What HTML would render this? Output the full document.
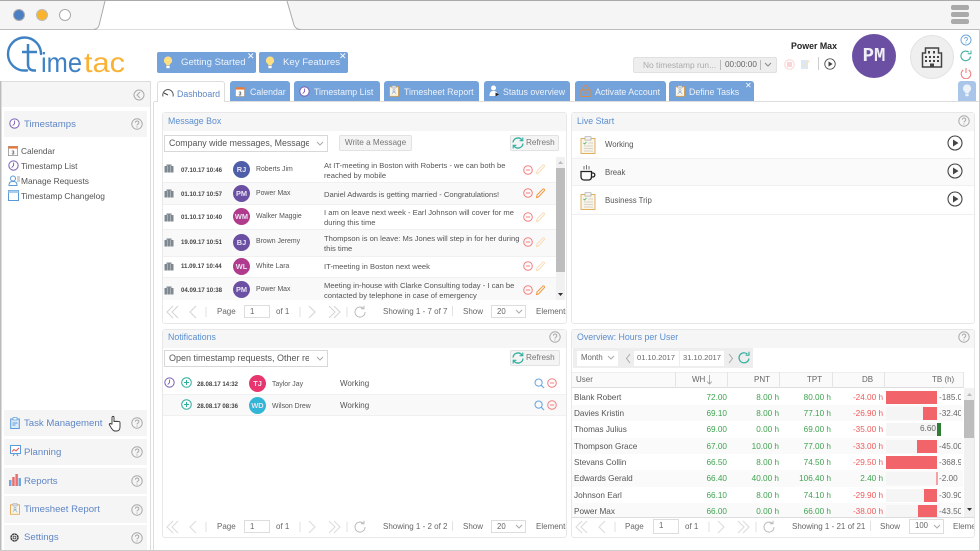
<!DOCTYPE html>
<html><head><meta charset="utf-8"><style>
html,body{margin:0;padding:0;background:#fff}
#p{position:relative;width:980px;height:551px;overflow:hidden;background:#fff;font-family:"Liberation Sans",sans-serif;font-size:8.4px;color:#555;filter:blur(.25px)}
#p div,#p svg{position:absolute}
.t{white-space:nowrap;line-height:12px;height:12px}
.tab{top:81px;height:20px;background:#74a2da;border-radius:3px 3px 0 0;color:#eef3fa;font-size:8.8px;line-height:23px;white-space:nowrap;box-sizing:border-box}
.nav{left:4px;width:143px;height:26px;background:#f5f5f5;color:#5f86c6;font-size:9.6px;line-height:27px}
.pan{background:#fff;border:1px solid #e8e8e8;border-radius:3px;box-sizing:border-box}
.ph{background:#f6f6f6;height:18px}
.ti{color:#5b8fd0;font-size:8.8px;line-height:12px;white-space:nowrap}
.av{width:17px;height:17px;border-radius:50%;color:#e8e4f2;font-size:7.4px;font-weight:bold;text-align:center;line-height:17px;background:#6a4fa3}
.d{font-size:6.1px;font-weight:bold;color:#444;white-space:nowrap;line-height:12px;margin-top:1px}
.n{font-size:6.9px;color:#555;white-space:nowrap;line-height:12px;margin-top:1px}
.m{font-size:7.6px;color:#555;line-height:10px;white-space:nowrap;margin-top:1px}
.g{color:#3fa350;text-align:right;font-size:8.2px;line-height:17px;white-space:nowrap}
.r{color:#ee5a5a;text-align:right;font-size:8.2px;line-height:17px;white-space:nowrap}
.u{font-size:8.2px;color:#555;line-height:17px;white-space:nowrap;left:574px}
.h{color:#666;font-size:8px;line-height:16px;top:372px;white-space:nowrap;text-align:right}
.bar{background:#f1646a;height:13px}
.bg{background:#f5f5f5;left:886px;width:51px;height:13px}
.v{font-size:8.2px;color:#666;left:939px;line-height:17px;width:22px;overflow:hidden;white-space:nowrap}
.pg{font-size:8px;color:#666;white-space:nowrap;line-height:12px;margin-top:1px}
.inp{border:1px solid #ddd;background:#fff;box-sizing:border-box;font-size:7.8px;color:#666;line-height:12px;padding-left:5px;white-space:nowrap}
.btn{background:#f4f4f4;border:1px solid #e2e2e2;border-radius:2px;box-sizing:border-box;color:#777;font-size:8.2px;line-height:14px;white-space:nowrap}
.sel{background:#fff;border:1px solid #d8d8d8;box-sizing:border-box;color:#555;font-size:9px;line-height:15px;padding-left:4px;white-space:nowrap;overflow:hidden}
</style></head><body><div id="p">
<svg width="0" height="0" style="left:0;top:0"><defs>
<symbol id="q" viewBox="0 0 12 12"><circle cx="6" cy="6" r="5.2" fill="none" stroke="#aaa"/><path d="M4.400 4.600a1.700 1.700 0 1 1 2.400 1.600c-.6.300-.8.600-.8 1.200" fill="none" stroke="#aaa"/><circle cx="6" cy="9" r=".6" fill="#aaa"/></symbol>
<symbol id="pl" viewBox="0 0 16 16"><circle cx="8" cy="8" r="7" fill="none" stroke="#444" stroke-width="1.100"/><path d="M6 4.500v7l5.500-3.500z" fill="#444"/></symbol>
<symbol id="mi" viewBox="0 0 10 10"><circle cx="5" cy="5" r="4.300" fill="none" stroke="#f08080"/><path d="M2.800 5h4.400" stroke="#f08080"/></symbol>
<symbol id="pe" viewBox="0 0 11 11"><path d="M1.500 9.500l.6-2.600 5.600-5.600c.5-.5 1-.5 1.500 0s.5 1 0 1.500L3.600 8.900z" fill="none" stroke="#f0963c"/></symbol>
<symbol id="pf" viewBox="0 0 11 11"><path d="M1.500 9.500l.6-2.600 5.600-5.600c.5-.5 1-.5 1.500 0s.5 1 0 1.500L3.600 8.900z" fill="none" stroke="#f9dcb8"/></symbol>
<symbol id="bd" viewBox="0 0 10 10"><path d="M.5 9.500V3h2V1.500h5V3h2v6.500z" fill="#7d8891"/><path d="M3.500 2.500v7M6.500 2.500v7" stroke="#d5d9dc" stroke-width=".5"/></symbol>
<symbol id="rf" viewBox="0 0 14 14"><path d="M2 6.500A5 5 0 0 1 11 4M12 7.500A5 5 0 0 1 3 10" fill="none" stroke="#2fae9e" stroke-width="1.300"/><path d="M11.800 1.500v3.200H8.600M2.200 12.500V9.300h3.200" fill="none" stroke="#2fae9e" stroke-width="1.100"/></symbol>
<symbol id="ck" viewBox="0 0 16 18"><path d="M1 2.500h14v15H1z" fill="#fbf5e6" stroke="#e0b060"/><rect x="5" y=".7" width="6" height="3.400" fill="#f3f3f3" stroke="#aaa" stroke-width=".7"/><path d="M3.500 7l1 1 2-2" fill="none" stroke="#36b070" stroke-width=".8"/><path d="M8 7h5M4 10h9M4 12.500h9M4 15h9" stroke="#c9c9c9" stroke-width=".8"/></symbol>
<symbol id="bu" viewBox="0 0 10 13"><path d="M5 .5a4 4 0 0 0-2.300 7.300c.5.500.6 1 .6 1.700h3.400c0-.7.100-1.200.6-1.700A4 4 0 0 0 5 .5z" fill="#ffdf80"/><rect x="3.400" y="10" width="3.200" height="2.200" fill="#fff"/></symbol>
<symbol id="cl" viewBox="0 0 12 12"><circle cx="6" cy="6" r="5.100" fill="#fff" stroke="#7a5fb5" stroke-width="1.100"/><path d="M6.200 2.800L6 6.200 4 8.200" fill="none" stroke="#7a5fb5"/></symbol>
<symbol id="cal" viewBox="0 0 12 12"><rect x=".5" y=".5" width="11" height="11" fill="#fff" stroke="#999"/><rect x=".5" y=".5" width="11" height="2.600" fill="#e9793a"/><text x="6" y="10" font-size="6.500" font-weight="bold" text-anchor="middle" fill="#555" font-family="Liberation Sans">3</text></symbol>
<symbol id="rp" viewBox="0 0 12 14"><path d="M.7 2h10.600v11.300H.7z" fill="#fbf5e6" stroke="#e0a040"/><rect x="3.500" y=".5" width="5" height="3" fill="#cfdcf0" stroke="#999" stroke-width=".5"/><circle cx="6" cy="6.500" r="1.300" fill="none" stroke="#6f9fd8" stroke-width=".7"/><path d="M3.500 11c.4-2 1.300-2.500 2.500-2.500S8.100 9 8.500 11" fill="none" stroke="#6f9fd8" stroke-width=".7"/></symbol>
<symbol id="mg" viewBox="0 0 11 11"><circle cx="4.600" cy="4.600" r="3.600" fill="none" stroke="#6fa8de" stroke-width="1.100"/><path d="M7.300 7.300L10 10" stroke="#6fa8de" stroke-width="1.200"/></symbol>
<symbol id="pls" viewBox="0 0 11 11"><circle cx="5.500" cy="5.500" r="4.800" fill="none" stroke="#2fae9e"/><path d="M3 5.500h5M5.500 3v5" stroke="#2fae9e"/></symbol>
</defs></svg>

<!-- Window chrome -->
<div style="left:0;top:0;width:980px;height:29px;background:#f5f5f5;border-bottom:1px solid #bbb"></div>
<div style="left:0;top:0;width:980px;height:1px;background:#aaa"></div>
<svg style="left:90px;top:0" width="220" height="31"><path d="M3 29.500c4 0 5-1.500 6-4L15 1h182l7 24c1 3 3 4.500 7 4.500z" fill="#fff"/><path d="M3 29.500c3 0 5-1 6-4L15 1M197 1l7 24c1 3 3 4.500 7 4.500" fill="none" stroke="#aaa"/><path d="M0 29.500h4M210 29.500h10" stroke="#bbb"/></svg>
<div style="left:13px;top:9px;width:10px;height:10px;border-radius:50%;background:#4a7fc4;border:1px solid #aaa"></div>
<div style="left:36px;top:9px;width:10px;height:10px;border-radius:50%;background:#f9b42d;border:1px solid #bbb"></div>
<div style="left:59px;top:9px;width:10px;height:10px;border-radius:50%;background:#fff;border:1px solid #aaa"></div>
<div style="left:951px;top:5px;width:18px;height:5px;border-radius:2px;background:#aaa"></div>
<div style="left:951px;top:12px;width:18px;height:5px;border-radius:2px;background:#aaa"></div>
<div style="left:951px;top:19px;width:18px;height:5px;border-radius:2px;background:#aaa"></div>

<!-- Logo -->
<svg style="left:5px;top:34px" width="130" height="42"><path d="M36 20A16.500 16.500 0 1 0 20 36.500H22" fill="none" stroke="#3f82c4" stroke-width="2.400" stroke-linecap="round"/><path d="M17 18h15M23 10v20c0 4 2 6.500 6 6.500h2" fill="none" stroke="#3f82c4" stroke-width="2.500"/>
<text x="36" y="38" font-family="Liberation Sans" font-size="28" fill="#3f82c4" textLength="41" lengthAdjust="spacingAndGlyphs">ime</text>
<text x="79" y="38" font-family="Liberation Sans" font-size="28" fill="#f9b233" textLength="41" lengthAdjust="spacingAndGlyphs">tac</text></svg>

<!-- Tips -->
<div class="tab" style="left:157px;top:52px;width:99px;height:21px;border-radius:2px;padding-left:24px;font-size:9.600px;line-height:21px">Getting Started</div>
<svg style="left:163px;top:56px" width="10" height="13"><use href="#bu"/></svg>
<div class="t" style="left:247px;top:50px;color:#fff;font-size:9px">✕</div>
<div class="tab" style="left:259px;top:52px;width:89px;height:21px;border-radius:2px;padding-left:24px;font-size:9.600px;line-height:21px">Key Features</div>
<svg style="left:265px;top:56px" width="10" height="13"><use href="#bu"/></svg>
<div class="t" style="left:339px;top:50px;color:#fff;font-size:9px">✕</div>

<!-- User area -->
<div class="t" style="left:791px;top:40px;font-weight:bold;font-size:8.800px;color:#222">Power Max</div>
<div style="left:633px;top:57px;width:144px;height:16px;background:#eee;border:1px solid #e0e0e0;border-radius:2px;box-sizing:border-box"></div>
<div class="t" style="left:643px;top:59px;font-size:8.400px;color:#aaa">No timestamp run...</div>
<div style="left:720px;top:60px;width:1px;height:10px;background:#bbb"></div>
<div class="t" style="left:725px;top:59px;font-size:8.200px;color:#666">00:00:00</div>
<div style="left:760px;top:60px;width:1px;height:10px;background:#bbb"></div>
<svg style="left:764px;top:62px" width="8" height="6"><path d="M1 1l3 3 3-3" fill="none" stroke="#888"/></svg>
<svg style="left:784px;top:59px" width="11" height="11"><circle cx="5.500" cy="5.500" r="4.800" fill="none" stroke="#fbd5d5"/><rect x="3" y="3" width="5" height="5" fill="#fbd5d5"/></svg>
<svg style="left:800px;top:58px" width="11" height="12"><path d="M1 2h7v9H1z" fill="#dbe8f5"/><path d="M3 8l6-6 1 1-6 6z" fill="#f6e3c0"/></svg>
<div style="left:818px;top:57px;width:1px;height:13px;background:#ccc"></div>
<svg style="left:824px;top:58px" width="12" height="12"><use href="#pl"/></svg>
<div style="left:852px;top:34px;width:44px;height:44px;border-radius:50%;background:#6a4fa3;color:#f0eef6;font-family:'Liberation Mono',monospace;font-weight:bold;font-size:19px;line-height:44px;text-align:center">PM</div>
<div style="left:910px;top:35px;width:44px;height:44px;border-radius:50%;background:#efefef;border:1px solid #e2e2e2;box-sizing:border-box"></div>
<svg style="left:921px;top:46px" width="22" height="22"><path d="M1.500 21V7h3V2h13v5h3v14z" fill="none" stroke="#444" stroke-width="1.500"/><path d="M7 5h2v2.500H7zm5 0h2v2.500h-2zM4 10h2v2H4zm4 0h2v2H8zm4 0h2v2h-2zm4 0h2v2h-2zM4 14h2v2H4zm4 0h2v2H8zm4 0h2v2h-2zm4 0h2v2h-2zM9 17.500h4V21H9z" fill="#444"/></svg>
<svg style="left:960px;top:34px" width="12" height="12"><circle cx="6" cy="6" r="5" fill="none" stroke="#6fa8de"/><path d="M4.500 4.800a1.500 1.500 0 1 1 2.200 1.400c-.5.300-.7.500-.7 1.100" fill="none" stroke="#6fa8de" stroke-width=".9"/><circle cx="6" cy="8.800" r=".6" fill="#6fa8de"/></svg>
<svg style="left:960px;top:50px" width="12" height="12"><path d="M10.500 6.500A4.800 4.800 0 1 1 8.800 2.200" fill="none" stroke="#3fae9e" stroke-width="1.100"/><path d="M11 .5v3.300H7.700" fill="none" stroke="#3fae9e"/></svg>
<svg style="left:960px;top:67px" width="12" height="12"><path d="M3.300 3a4.800 4.800 0 1 0 5.400 0M6 1v5" fill="none" stroke="#f08080" stroke-width="1.100"/></svg>

<!-- Tabs -->
<div style="left:154px;top:101px;width:826px;height:1px;background:#ddd"></div>
<div class="tab" style="left:157px;width:68px;height:21px;background:#fff;border:1px solid #ddd;border-bottom:none;color:#5f86c6;padding-left:19px;line-height:24px">Dashboard</div>
<svg style="left:162px;top:87px" width="12" height="10"><path d="M1 9.500A5.500 5.500 0 0 1 6 2.500a5.500 5.500 0 0 1 5 7" fill="none" stroke="#555"/><path d="M2 6l4 2" stroke="#444"/></svg>
<div class="tab" style="left:230px;width:60px;padding-left:20px">Calendar</div>
<svg style="left:235px;top:87px" width="10" height="10"><use href="#cal"/></svg>
<div class="tab" style="left:294px;width:86px;padding-left:20px">Timestamp List</div>
<svg style="left:299px;top:86px" width="11" height="11"><use href="#cl"/></svg>
<div class="tab" style="left:384px;width:95px;padding-left:20px">Timesheet Report</div>
<svg style="left:389px;top:85px" width="10" height="12"><use href="#rp"/></svg>
<div class="tab" style="left:484px;width:86px;padding-left:19px">Status overview</div>
<svg style="left:489px;top:85px" width="11" height="12"><circle cx="4.500" cy="3" r="2.500" fill="#fff"/><path d="M.5 11c0-4 1.500-5 4-5s4 1 4 5z" fill="#fff"/><path d="M6.500 7.500v4l3.500-2z" fill="#222"/></svg>
<div class="tab" style="left:575px;width:91px;padding-left:20px">Activate Account</div>
<svg style="left:580px;top:85px" width="11" height="12"><rect x="1" y="5" width="9" height="6.500" fill="none" stroke="#e08a3c"/><path d="M3 5V3c0-3 5-3 5 0v2M3.500 8h4" fill="none" stroke="#e08a3c"/></svg>
<div class="tab" style="left:669px;width:85px;padding-left:20px">Define Tasks</div>
<svg style="left:675px;top:85px" width="10" height="12"><use href="#rp"/></svg>
<div class="t" style="left:745px;top:80px;color:#fff;font-size:8px">✕</div>
<div class="tab" style="left:958px;width:18px;background:#a9c6ea"></div>
<svg style="left:962px;top:84px" width="10" height="13"><path d="M5 .5a4 4 0 0 0-2.300 7.300c.5.500.6 1 .6 1.700h3.400c0-.7.100-1.200.6-1.700A4 4 0 0 0 5 .5z" fill="#eef3f9"/><rect x="3.400" y="10" width="3.200" height="2.200" fill="#eef3f9"/></svg>

<!-- Sidebar -->
<div style="left:1px;top:81px;width:150px;height:469px;border:1px solid #ddd;border-bottom:none;box-sizing:border-box"></div>
<div style="left:2px;top:82px;width:148px;height:25px;background:#f5f5f5"></div>
<svg style="left:133px;top:89px" width="12" height="12"><circle cx="6" cy="6" r="5" fill="none" stroke="#aaa"/><path d="M7 3L4 6l3 3" fill="none" stroke="#aaa"/></svg>
<div style="left:153px;top:102px;width:1px;height:449px;background:#ddd"></div>
<div style="left:0;top:81px;width:1px;height:470px;background:#bbb"></div>
<div style="left:979px;top:29px;width:1px;height:522px;background:#ccc"></div>
<div style="left:0;top:550px;width:980px;height:1px;background:#ccc"></div>

<div class="nav" style="top:111px;padding-left:20px;box-sizing:border-box;height:26px">Timestamps</div>
<svg style="left:9px;top:118px" width="11" height="11"><use href="#cl"/></svg>
<svg style="left:131px;top:118px" width="12" height="12"><use href="#q"/></svg>
<svg style="left:8px;top:146px" width="10" height="10"><use href="#cal"/></svg><div class="t" style="left:21px;top:145px">Calendar</div>
<svg style="left:8px;top:160px" width="11" height="11"><use href="#cl"/></svg><div class="t" style="left:21px;top:160px">Timestamp List</div>
<svg style="left:8px;top:175px" width="12" height="11"><circle cx="5" cy="3.500" r="2.500" fill="none" stroke="#5a9ad8"/><path d="M1 10.500c0-3 1-4 4-4s4 1 4 4z" fill="none" stroke="#5a9ad8"/><path d="M9 2h3M9 4h3M9 6h3" stroke="#888" stroke-width=".7"/></svg><div class="t" style="left:21px;top:175px">Manage Requests</div>
<svg style="left:8px;top:190px" width="11" height="11"><rect x=".5" y=".5" width="10" height="10" fill="#fff" stroke="#5a9ad8"/><rect x=".5" y=".5" width="10" height="2.500" fill="#a9cdee"/></svg><div class="t" style="left:21px;top:190px">Timestamp Changelog</div>

<div class="nav" style="top:410px;padding-left:20px;box-sizing:border-box;line-height:28px">Task Management</div>
<svg style="left:10px;top:417px" width="10" height="12"><path d="M.7 2h8.600v9.500H.7z" fill="#dcebf8" stroke="#5a9ad8"/><rect x="3" y=".5" width="4" height="2.500" fill="#fff" stroke="#5a9ad8" stroke-width=".7"/><path d="M2.500 6h5M2.500 8h3" stroke="#5a9ad8"/></svg>
<svg style="left:108px;top:415px" width="13" height="17"><path d="M4 9V2.500c0-1.500 2-1.500 2 0V7c0-1 2-1 2 0 0-1 2-1 2 0 0-.7 2-.7 2 .5V12c0 2-1 4-3 4H7c-2 0-3-2-4-3.500L1.500 10c-.8-1.200.8-2 1.500-1z" fill="#fff" stroke="#333" stroke-width=".9"/></svg>
<svg style="left:131px;top:417px" width="12" height="12"><use href="#q"/></svg>
<div class="nav" style="top:439px;padding-left:20px;box-sizing:border-box;line-height:27.500px">Planning</div>
<svg style="left:10px;top:445px" width="11" height="12"><rect x=".5" y=".5" width="10" height="8" fill="#fff" stroke="#5a9ad8"/><path d="M2 6.500l2-2 2 1.500 3-3" fill="none" stroke="#e85050"/><path d="M3 11l1.500-2.500M8 11L6.500 8.500" stroke="#5a9ad8"/></svg>
<svg style="left:131px;top:446px" width="12" height="12"><use href="#q"/></svg>
<div class="nav" style="top:468px;padding-left:20px;box-sizing:border-box;line-height:27.500px">Reports</div>
<svg style="left:9px;top:474px" width="12" height="12"><rect x="0" y="6" width="2.500" height="6" fill="#6fa8de"/><rect x="3.200" y="3" width="2.500" height="9" fill="#e87070"/><rect x="6.400" y="0" width="2.500" height="12" fill="#e87070"/><rect x="9.500" y="4" width="2.500" height="8" fill="#6fa8de"/></svg>
<svg style="left:131px;top:475px" width="12" height="12"><use href="#q"/></svg>
<div class="nav" style="top:496px;padding-left:20px;box-sizing:border-box;height:27px;line-height:28px">Timesheet Report</div>
<svg style="left:10px;top:503px" width="10" height="12"><use href="#rp"/></svg>
<svg style="left:131px;top:504px" width="12" height="12"><use href="#q"/></svg>
<div class="nav" style="top:525px;padding-left:20px;box-sizing:border-box;height:25px;line-height:26px">Settings</div>
<svg style="left:9px;top:532px" width="11" height="11"><circle cx="5.500" cy="5.500" r="3.400" fill="none" stroke="#444" stroke-width="1.600" stroke-dasharray="1.800 .9"/><circle cx="5.500" cy="5.500" r="3.600" fill="none" stroke="#444" stroke-width=".7"/><circle cx="5.500" cy="5.500" r="1.400" fill="none" stroke="#444" stroke-width=".8"/></svg>
<svg style="left:131px;top:532px" width="12" height="12"><use href="#q"/></svg>

<!-- Message Box -->
<div class="pan" style="left:162px;top:112px;width:405px;height:212px"></div>
<div class="ph" style="left:163px;top:113px;width:403px"></div>
<div class="ti" style="left:168px;top:115px">Message Box</div>
<div class="sel" style="left:164px;top:135px;width:164px;height:17px;font-size:8.800px">Company wide messages, Messages</div>
<div style="left:309px;top:136px;width:18px;height:15px;background:#fff"></div>
<svg style="left:316px;top:141px" width="8" height="6"><path d="M1 1l3 3 3-3" fill="none" stroke="#aaa"/></svg>
<div class="btn" style="left:339px;top:135px;width:73px;height:16px;text-align:center">Write a Message</div>
<div class="btn" style="left:510px;top:135px;width:49px;height:16px;padding-left:15px">Refresh</div>
<svg style="left:511px;top:136px" width="14" height="14"><use href="#rf"/></svg>

<div style="left:163px;top:182px;width:393px;height:22px;background:#f9f9f9"></div>
<div style="left:163px;top:229px;width:393px;height:27px;background:#f9f9f9"></div>
<div style="left:163px;top:277px;width:393px;height:23px;background:#f9f9f9"></div>
<div style="left:163px;top:182px;width:393px;height:1px;background:#f0f0f0"></div>
<div style="left:163px;top:204px;width:393px;height:1px;background:#f0f0f0"></div>
<div style="left:163px;top:229px;width:393px;height:1px;background:#f0f0f0"></div>
<div style="left:163px;top:256px;width:393px;height:1px;background:#f0f0f0"></div>
<div style="left:163px;top:277px;width:393px;height:1px;background:#f0f0f0"></div>
<div style="left:556px;top:157px;width:9px;height:143px;background:#f1f1f1"></div>
<div style="left:556px;top:168px;width:9px;height:104px;background:#bdbdbd"></div>
<svg style="left:557px;top:160px" width="7" height="5"><path d="M3.500 1L6 4H1z" fill="#bbb"/></svg>
<svg style="left:557px;top:292px" width="7" height="5"><path d="M3.500 4L6 1H1z" fill="#333"/></svg>

<svg style="left:164px;top:163px" width="10" height="10"><use href="#bd"/></svg><div class="d" style="left:181px;top:164px">07.10.17 10:46</div><div class="av" style="left:233px;top:161px;background:#4f5ea8">RJ</div><div class="n" style="left:256px;top:163px">Roberts Jim</div><div class="m" style="left:324px;top:160px">At IT-meeting in Boston with Roberts - we can both be<br>reached by mobile</div><svg style="left:523px;top:165px" width="10" height="10"><use href="#mi"/></svg><svg style="left:535px;top:164px" width="11" height="11"><use href="#pf"/></svg>
<svg style="left:164px;top:188px" width="10" height="10"><use href="#bd"/></svg><div class="d" style="left:181px;top:188px">01.10.17 10:57</div><div class="av" style="left:233px;top:185px">PM</div><div class="n" style="left:256px;top:187px">Power Max</div><div class="m" style="left:324px;top:189px">Daniel Adwards is getting married - Congratulations!</div><svg style="left:523px;top:188px" width="10" height="10"><use href="#mi"/></svg><svg style="left:535px;top:188px" width="11" height="11"><use href="#pe"/></svg>
<svg style="left:164px;top:212px" width="10" height="10"><use href="#bd"/></svg><div class="d" style="left:181px;top:211px">01.10.17 10:40</div><div class="av" style="left:233px;top:208px;background:#b03a8c">WM</div><div class="n" style="left:256px;top:210px">Walker Maggie</div><div class="m" style="left:324px;top:207px">I am on leave next week - Earl Johnson will cover for me<br>during this time</div><svg style="left:523px;top:212px" width="10" height="10"><use href="#mi"/></svg><svg style="left:535px;top:212px" width="11" height="11"><use href="#pf"/></svg>
<svg style="left:164px;top:237px" width="10" height="10"><use href="#bd"/></svg><div class="d" style="left:181px;top:236px">19.09.17 10:51</div><div class="av" style="left:233px;top:234px">BJ</div><div class="n" style="left:256px;top:235px">Brown Jeremy</div><div class="m" style="left:324px;top:233px">Thompson is on leave: Ms Jones will step in for her during<br>this time</div><svg style="left:523px;top:237px" width="10" height="10"><use href="#mi"/></svg><svg style="left:535px;top:237px" width="11" height="11"><use href="#pf"/></svg>
<svg style="left:164px;top:261px" width="10" height="10"><use href="#bd"/></svg><div class="d" style="left:181px;top:260px">11.09.17 10:44</div><div class="av" style="left:233px;top:258px;background:#b03a8c">WL</div><div class="n" style="left:256px;top:260px">White Lara</div><div class="m" style="left:324px;top:261px">IT-meeting in Boston next week</div><svg style="left:523px;top:261px" width="10" height="10"><use href="#mi"/></svg><svg style="left:535px;top:261px" width="11" height="11"><use href="#pf"/></svg>
<svg style="left:164px;top:285px" width="10" height="10"><use href="#bd"/></svg><div class="d" style="left:181px;top:284px">04.09.17 10:38</div><div class="av" style="left:233px;top:281px">PM</div><div class="n" style="left:256px;top:283px">Power Max</div><div class="m" style="left:324px;top:280px">Meeting in-house with Clarke Consulting today - I can be<br>contacted by telephone in case of emergency</div><svg style="left:523px;top:285px" width="10" height="10"><use href="#mi"/></svg><svg style="left:535px;top:285px" width="11" height="11"><use href="#pe"/></svg>

<!-- message pager -->
<svg style="left:166px;top:305px" width="190" height="14"><g fill="none" stroke="#d5d5d5" stroke-width="1.100"><path d="M7 1L1 7l6 6M12 1L6 7l6 6M30 1l-6 6 6 6M143 1l6 6-6 6M163 1l6 6-6 6M168 1l6 6-6 6"/></g><path d="M40 2v10M134 2v10M181 2v10" stroke="#e2e2e2"/></svg>
<svg style="left:354px;top:305px" width="13" height="13"><path d="M11 7a5 5 0 1 1-1.500-3.500M10 .8v3H7" fill="none" stroke="#bbb"/></svg>
<div class="pg" style="left:217px;top:305px">Page</div><div class="inp" style="left:244px;top:305px;width:26px;height:13px">1</div><div class="pg" style="left:276px;top:305px">of 1</div>
<div class="pg" style="left:383px;top:305px">Showing 1 - 7 of 7</div><div style="left:452px;top:306px;width:1px;height:10px;background:#e2e2e2"></div><div class="pg" style="left:463px;top:305px">Show</div><div class="inp" style="left:491px;top:305px;width:35px;height:13px">20</div><svg style="left:515px;top:309px" width="8" height="6"><path d="M1 1l3 3 3-3" fill="none" stroke="#aaa"/></svg>
<div class="pg" style="left:536px;top:305px;width:30px;overflow:hidden">Elements</div>

<!-- Live Start -->
<div class="pan" style="left:571px;top:112px;width:404px;height:212px"></div>
<div class="ph" style="left:572px;top:113px;width:402px"></div>
<div class="ti" style="left:577px;top:115px">Live Start</div>
<svg style="left:958px;top:115px" width="12" height="12"><use href="#q"/></svg>
<div style="left:572px;top:158px;width:402px;height:28px;background:#fafafa;border-top:1px solid #f0f0f0;border-bottom:1px solid #f0f0f0;box-sizing:border-box"></div>
<div style="left:572px;top:214px;width:402px;height:1px;background:#f0f0f0"></div>
<svg style="left:580px;top:136px" width="16" height="18"><use href="#ck"/></svg><div class="n" style="left:605px;top:138px;font-size:7.800px">Working</div><svg style="left:947px;top:135px" width="16" height="16"><use href="#pl"/></svg>
<svg style="left:579px;top:165px" width="18" height="16"><path d="M2 6.500h10.500v5c0 2-1 3.500-3 3.500h-4.500c-2 0-3-1.500-3-3.500zM12.500 8h1.500c2.500 0 2.500 4-.5 4h-1.200" fill="none" stroke="#222" stroke-width="1.300"/><path d="M5 1v3.500M7.500 0v4.500M10 1v3.500" stroke="#555" stroke-width=".8"/></svg><div class="n" style="left:605px;top:166px;font-size:7.800px">Break</div><svg style="left:947px;top:163px" width="16" height="16"><use href="#pl"/></svg>
<svg style="left:580px;top:192px" width="16" height="18"><use href="#ck"/></svg><div class="n" style="left:605px;top:194px;font-size:7.800px">Business Trip</div><svg style="left:947px;top:191px" width="16" height="16"><use href="#pl"/></svg>

<!-- Notifications -->
<div class="pan" style="left:162px;top:329px;width:405px;height:209px"></div>
<div class="ph" style="left:163px;top:330px;width:403px"></div>
<div class="ti" style="left:168px;top:331px">Notifications</div>
<svg style="left:549px;top:331px" width="12" height="12"><use href="#q"/></svg>
<div class="sel" style="left:164px;top:350px;width:164px;height:17px">Open timestamp requests, Other re</div>
<div style="left:309px;top:351px;width:18px;height:15px;background:#fff"></div>
<svg style="left:316px;top:356px" width="8" height="6"><path d="M1 1l3 3 3-3" fill="none" stroke="#aaa"/></svg>
<div class="btn" style="left:510px;top:350px;width:50px;height:16px;padding-left:15px">Refresh</div>
<svg style="left:511px;top:351px" width="14" height="14"><use href="#rf"/></svg>
<div style="left:163px;top:394px;width:403px;height:22px;background:#f9f9f9;border-top:1px solid #f0f0f0;border-bottom:1px solid #f0f0f0;box-sizing:border-box"></div>
<svg style="left:164px;top:377px" width="11" height="11"><use href="#cl"/></svg>
<svg style="left:181px;top:377px" width="11" height="11"><use href="#pls"/></svg><div class="d" style="left:197px;top:378px">28.08.17 14:32</div><div class="av" style="left:249px;top:375px;background:#e8356d">TJ</div><div class="n" style="left:272px;top:378px">Taylor Jay</div><div class="m" style="left:340px;top:378px;font-size:8px">Working</div><svg style="left:534px;top:378px" width="11" height="11"><use href="#mg"/></svg><svg style="left:547px;top:378px" width="10" height="10"><use href="#mi"/></svg>
<svg style="left:181px;top:399px" width="11" height="11"><use href="#pls"/></svg><div class="d" style="left:197px;top:400px">28.08.17 08:36</div><div class="av" style="left:249px;top:397px;background:#33b5d6">WD</div><div class="n" style="left:272px;top:400px">Wilson Drew</div><div class="m" style="left:340px;top:400px;font-size:8px">Working</div><svg style="left:534px;top:400px" width="11" height="11"><use href="#mg"/></svg><svg style="left:547px;top:400px" width="10" height="10"><use href="#mi"/></svg>

<svg style="left:166px;top:520px" width="190" height="14"><g fill="none" stroke="#dcdcdc" stroke-width="1.100"><path d="M7 1L1 7l6 6M12 1L6 7l6 6M30 1l-6 6 6 6M143 1l6 6-6 6M163 1l6 6-6 6M168 1l6 6-6 6"/></g><path d="M40 2v10M134 2v10M181 2v10" stroke="#e2e2e2"/></svg>
<svg style="left:354px;top:520px" width="13" height="13"><path d="M11 7a5 5 0 1 1-1.500-3.500M10 .8v3H7" fill="none" stroke="#bbb"/></svg>
<div class="pg" style="left:217px;top:520px">Page</div><div class="inp" style="left:244px;top:520px;width:26px;height:13px">1</div><div class="pg" style="left:276px;top:520px">of 1</div>
<div class="pg" style="left:383px;top:520px">Showing 1 - 2 of 2</div><div style="left:452px;top:521px;width:1px;height:10px;background:#e2e2e2"></div><div class="pg" style="left:463px;top:520px">Show</div><div class="inp" style="left:491px;top:520px;width:35px;height:13px">20</div><svg style="left:515px;top:524px" width="8" height="6"><path d="M1 1l3 3 3-3" fill="none" stroke="#aaa"/></svg>
<div class="pg" style="left:536px;top:520px;width:30px;overflow:hidden">Elements</div>

<!-- Overview -->
<div class="pan" style="left:571px;top:329px;width:404px;height:209px"></div>
<div class="ph" style="left:572px;top:330px;width:402px"></div>
<div class="ti" style="left:577px;top:331px">Overview: Hours per User</div>
<svg style="left:958px;top:331px" width="12" height="12"><use href="#q"/></svg>
<div style="left:573px;top:348px;width:180px;height:20px;background:#eee"></div>
<div class="inp" style="left:577px;top:351px;width:41px;height:15px;line-height:14px;border:none;padding-left:4px">Month</div>
<svg style="left:607px;top:355px" width="8" height="6"><path d="M1 1l3 3 3-3" fill="none" stroke="#aaa"/></svg>
<svg style="left:625px;top:353px" width="7" height="11"><path d="M5 1L1.500 5.500 5 10" fill="none" stroke="#aaa"/></svg>
<div class="inp" style="left:634px;top:351px;width:45px;height:15px;line-height:14px;border:none;padding-left:3px;font-size:7.600px">01.10.2017</div>
<div class="inp" style="left:680px;top:351px;width:44px;height:15px;line-height:14px;border:none;padding-left:3px;font-size:7.600px">31.10.2017</div>
<svg style="left:727px;top:353px" width="7" height="11"><path d="M2 1l3.500 4.500L2 10" fill="none" stroke="#aaa"/></svg>
<svg style="left:737px;top:351px" width="14" height="14"><path d="M12 7.500A5 5 0 1 1 10.300 3" fill="none" stroke="#2fae9e" stroke-width="1.200"/><path d="M12 .8v3.400H8.600" fill="none" stroke="#2fae9e" stroke-width="1.100"/></svg>

<div style="left:572px;top:372px;width:391px;height:16px;background:#fafafa;border-top:1px solid #eee;border-bottom:1px solid #ddd;box-sizing:border-box"></div>
<div style="left:675px;top:372px;width:1px;height:16px;background:#e4e4e4"></div><div style="left:727px;top:372px;width:1px;height:16px;background:#e4e4e4"></div><div style="left:779px;top:372px;width:1px;height:16px;background:#e4e4e4"></div><div style="left:832px;top:372px;width:1px;height:16px;background:#e4e4e4"></div><div style="left:884px;top:372px;width:1px;height:16px;background:#e4e4e4"></div><div style="left:963px;top:372px;width:1px;height:16px;background:#e4e4e4"></div>
<div class="h" style="left:576px">User</div><div class="h" style="left:692px">WH</div>
<svg style="left:706px;top:375px" width="7" height="10"><path d="M3.500 0v9M1 6.500l2.500 2.500L6 6.500" fill="none" stroke="#999" stroke-width=".8"/></svg>
<div class="h" style="left:754px">PNT</div><div class="h" style="left:807px">TPT</div><div class="h" style="left:862px">DB</div><div class="h" style="left:932px">TB (h)</div>

<div style="left:572px;top:405px;width:391px;height:16px;background:#fafafa"></div>
<div style="left:572px;top:438px;width:391px;height:16px;background:#fafafa"></div>
<div style="left:572px;top:470px;width:391px;height:17px;background:#fafafa"></div>
<div style="left:572px;top:503px;width:391px;height:14px;background:#fafafa"></div>
<div style="left:964px;top:388px;width:10px;height:129px;background:#f1f1f1"></div>
<div style="left:964px;top:400px;width:10px;height:38px;background:#bdbdbd"></div>
<svg style="left:966px;top:392px" width="7" height="5"><path d="M3.500 1L6 4H1z" fill="#bbb"/></svg>
<svg style="left:966px;top:507px" width="7" height="5"><path d="M3.500 4L6 1H1z" fill="#333"/></svg>

<!-- rows -->
<div class="u" style="top:389px">Blank Robert</div><div class="g" style="left:690px;top:389px;width:37px">72.00</div><div class="g" style="left:735px;top:389px;width:44px">8.00 h</div><div class="g" style="left:785px;top:389px;width:46px">80.00 h</div><div class="r" style="left:840px;top:389px;width:43px">-24.00 h</div><div class="bg" style="top:391px"></div><div class="bar" style="left:886px;top:391px;width:51px"></div><div class="v" style="top:389px">-185.00</div>
<div class="u" style="top:405px">Davies Kristin</div><div class="g" style="left:690px;top:405px;width:37px">69.10</div><div class="g" style="left:735px;top:405px;width:44px">8.00 h</div><div class="g" style="left:785px;top:405px;width:46px">77.10 h</div><div class="r" style="left:840px;top:405px;width:43px">-26.90 h</div><div class="bg" style="top:407px"></div><div class="bar" style="left:923px;top:407px;width:14px"></div><div class="v" style="top:405px">-32.40</div>
<div class="u" style="top:421px">Thomas Julius</div><div class="g" style="left:690px;top:421px;width:37px">69.00</div><div class="g" style="left:735px;top:421px;width:44px">0.00 h</div><div class="g" style="left:785px;top:421px;width:46px">69.00 h</div><div class="r" style="left:840px;top:421px;width:43px">-35.00 h</div><div class="bg" style="top:423px"></div><div class="t" style="left:920px;top:423px;font-size:8.200px;color:#666">6.60</div><div class="bar" style="left:937px;top:423px;width:4px;background:#2e7d32"></div>
<div class="u" style="top:438px">Thompson Grace</div><div class="g" style="left:690px;top:438px;width:37px">67.00</div><div class="g" style="left:735px;top:438px;width:44px">10.00 h</div><div class="g" style="left:785px;top:438px;width:46px">77.00 h</div><div class="r" style="left:840px;top:438px;width:43px">-33.00 h</div><div class="bg" style="top:440px"></div><div class="bar" style="left:917px;top:440px;width:20px"></div><div class="v" style="top:438px">-45.00</div>
<div class="u" style="top:454px">Stevans Collin</div><div class="g" style="left:690px;top:454px;width:37px">66.50</div><div class="g" style="left:735px;top:454px;width:44px">8.00 h</div><div class="g" style="left:785px;top:454px;width:46px">74.50 h</div><div class="r" style="left:840px;top:454px;width:43px">-29.50 h</div><div class="bg" style="top:456px"></div><div class="bar" style="left:886px;top:456px;width:51px"></div><div class="v" style="top:454px">-368.90</div>
<div class="u" style="top:470px">Edwards Gerald</div><div class="g" style="left:690px;top:470px;width:37px">66.40</div><div class="g" style="left:735px;top:470px;width:44px">40.00 h</div><div class="g" style="left:785px;top:470px;width:46px">106.40 h</div><div class="g" style="left:840px;top:470px;width:43px">2.40 h</div><div class="bg" style="top:472px"></div><div class="bar" style="left:936px;top:472px;width:1.500px;background:#f5a0a4"></div><div class="v" style="top:470px">-2.00</div>
<div class="u" style="top:487px">Johnson Earl</div><div class="g" style="left:690px;top:487px;width:37px">66.10</div><div class="g" style="left:735px;top:487px;width:44px">8.00 h</div><div class="g" style="left:785px;top:487px;width:46px">74.10 h</div><div class="r" style="left:840px;top:487px;width:43px">-29.90 h</div><div class="bg" style="top:489px"></div><div class="bar" style="left:924px;top:489px;width:13px"></div><div class="v" style="top:487px">-30.90</div>
<div class="u" style="top:503px">Power Max</div><div class="g" style="left:690px;top:503px;width:37px">66.00</div><div class="g" style="left:735px;top:503px;width:44px">0.00 h</div><div class="g" style="left:785px;top:503px;width:46px">66.00 h</div><div class="r" style="left:840px;top:503px;width:43px">-38.00 h</div><div class="bg" style="top:505px;height:12px"></div><div class="bar" style="left:918px;top:505px;width:19px;height:12px"></div><div class="v" style="top:503px">-43.50</div>
<div style="left:572px;top:517px;width:402px;height:1px;background:#ddd"></div>

<svg style="left:575px;top:520px" width="190" height="14"><g fill="none" stroke="#dcdcdc" stroke-width="1.100"><path d="M7 1L1 7l6 6M12 1L6 7l6 6M30 1l-6 6 6 6M143 1l6 6-6 6M163 1l6 6-6 6M168 1l6 6-6 6"/></g><path d="M40 2v10M134 2v10M181 2v10" stroke="#e2e2e2"/></svg>
<svg style="left:763px;top:520px" width="13" height="13"><path d="M11 7a5 5 0 1 1-1.500-3.500M10 .8v3H7" fill="none" stroke="#bbb"/></svg>
<div class="pg" style="left:625px;top:520px">Page</div><div class="inp" style="left:653px;top:519px;width:26px;height:15px">1</div><div class="pg" style="left:685px;top:520px">of 1</div>
<div class="pg" style="left:792px;top:520px">Showing 1 - 21 of 21</div><div style="left:870px;top:521px;width:1px;height:10px;background:#e2e2e2"></div><div class="pg" style="left:880px;top:520px">Show</div><div class="inp" style="left:909px;top:519px;width:35px;height:15px">100</div><svg style="left:933px;top:524px" width="8" height="6"><path d="M1 1l3 3 3-3" fill="none" stroke="#aaa"/></svg>
<div class="pg" style="left:953px;top:520px;width:21px;overflow:hidden">Elements</div>
</div></body></html>
